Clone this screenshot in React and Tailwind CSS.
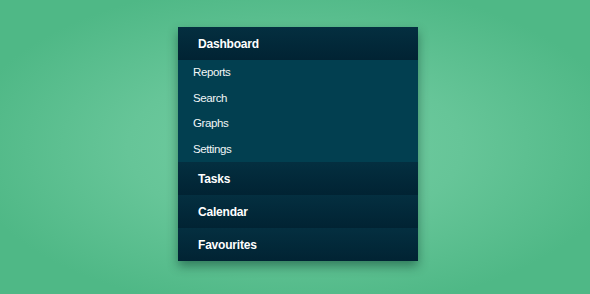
const sections = [
  { title: "Dashboard", items: ["Reports", "Search", "Graphs", "Settings"] },
  { title: "Tasks" },
  { title: "Calendar" },
  { title: "Favourites" },
];

const App = () => {
  return (
    <div
      className="w-[590px] h-[294px] overflow-hidden bg-[radial-gradient(ellipse_at_50%_50%,#74cea3_0%,#66c598_40%,#4fb886_80%)] pt-[27px] pl-[178px]"
      style={{ fontFamily: '"Liberation Sans", Arial, sans-serif' }}
    >
      {/* Menu panel */}
      <div className="w-[240px] shadow-[0_5px_10px_rgba(0,40,30,0.45)]">
        {sections.map((s) => (
          <div key={s.title}>
            <div className="h-[33px] flex items-center pl-[20px] bg-gradient-to-b from-[#042f40] to-[#012333] text-white text-[12px] tracking-[-0.2px] font-bold">
              {s.title}
            </div>
            {s.items && (
              <ul className="bg-[#023f50]">
                {s.items.map((item) => (
                  <li
                    key={item}
                    className="h-[25.5px] flex items-center pl-[15px] text-[11.5px] tracking-[-0.4px] text-[#f2f6f7]"
                  >
                    {item}
                  </li>
                ))}
              </ul>
            )}
          </div>
        ))}
      </div>
    </div>
  );
};

export default App;
